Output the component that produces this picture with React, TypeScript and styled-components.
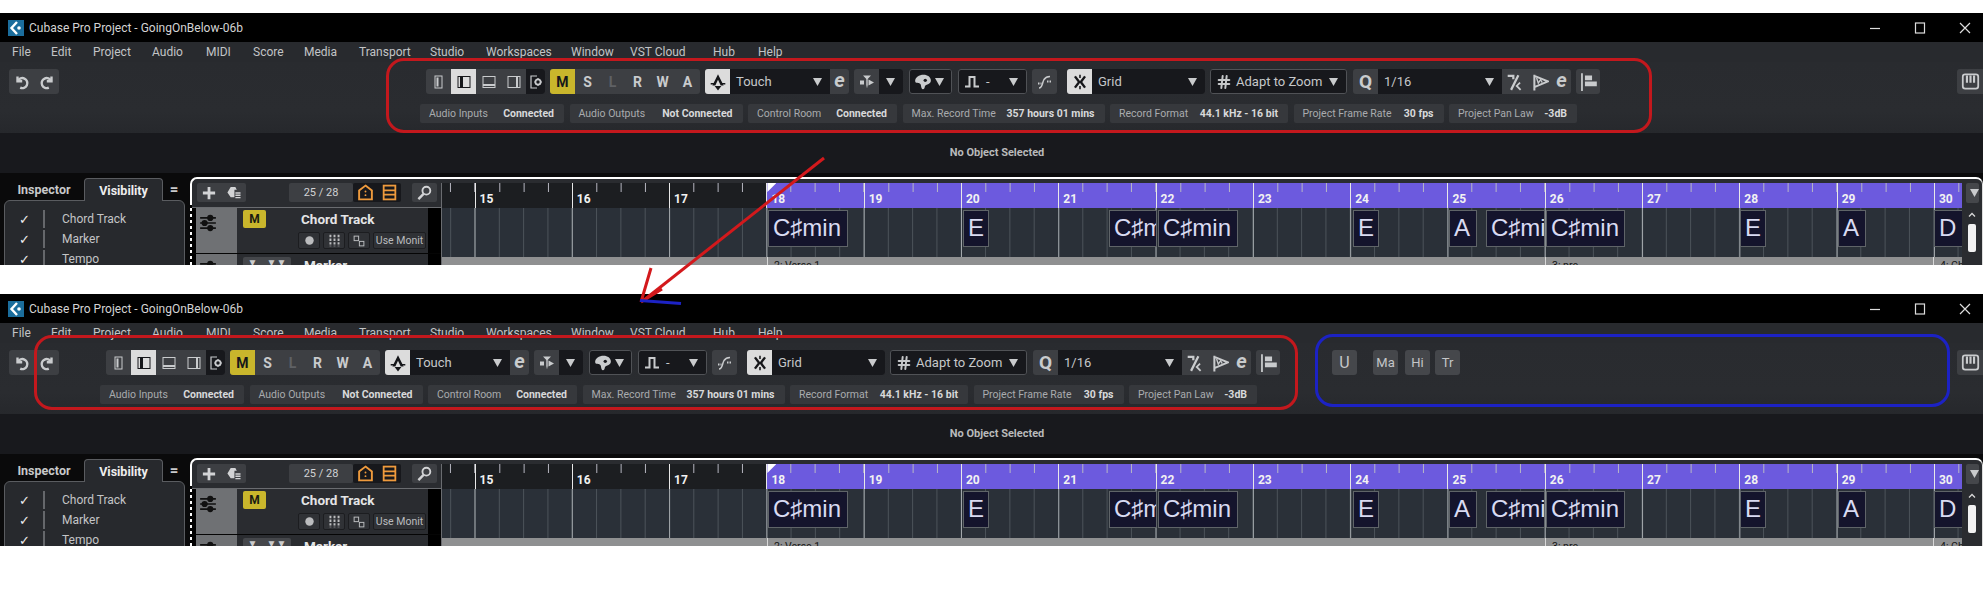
import React from 'react'
import styled, { createGlobalStyle } from 'styled-components'
import { Hash } from 'lucide-react'

const GlobalStyle = createGlobalStyle`
  html, body {
    margin: 0;
    padding: 0;
    background: #fff;
  }
`

const Page = styled.div`
  position: relative;
  width: 1983px;
  height: 600px;
  overflow: hidden;
  background: #fff;
  padding-top: 13px;
  box-sizing: border-box;
  display: flex;
  flex-direction: column;
  gap: 29px;
  font-family: Roboto, 'Open Sans', sans-serif;
`

const Shot = styled.div`
  position: relative;
  height: 252px;
  overflow: hidden;
  display: flex;
  flex-direction: column;
  background: #0a0a0b;
`

const TitleBar = styled.div`
  height: 29px;
  flex: none;
  background: #000;
  color: #d4d4d4;
  display: flex;
  align-items: center;
  padding-left: 8px;
  font-size: 12px;
  gap: 5px;
`

const WindowButtons = styled.div`
  margin-left: auto;
  display: flex;
  width: 114px;
  color: #ddd;
  align-items: center;
`

const WindowButton = styled.svg`
  width: 12px;
  height: 12px;
  margin-right: 33px;
  flex: none;
  fill: none;
  stroke: currentColor;
  stroke-width: 1.2;
  &:last-child {
    margin-right: 0;
  }
`

const MenuBar = styled.div`
  height: 20px;
  flex: none;
  background: #282a2e;
  display: flex;
  align-items: center;
  font-size: 12px;
  color: #c2c4c6;
  position: relative;
`

const MenuItem = styled.span<{ $x: number }>`
  position: absolute;
  left: ${p => p.$x}px;
`

const Toolbar = styled.div`
  height: 71px;
  flex: none;
  box-sizing: border-box;
  background: linear-gradient(#292b2f, #2a2c30 70%, #26282c);
  display: flex;
  align-items: flex-start;
  padding-top: 7px;
  padding-left: 9px;
`

const Center = styled.div<{ $ml: number }>`
  margin-left: ${p => p.$ml}px;
  width: 1180px;
  flex: none;
  display: flex;
  flex-direction: column;
  gap: 10px;
`

const ToolRow = styled.div`
  display: flex;
  padding-left: 6px;
`

const Group = styled.div<{ $w: number; $before?: number; $tone?: string; $outlined?: boolean }>`
  width: ${p => p.$w}px;
  margin-left: ${p => p.$before ?? 0}px;
  height: 25px;
  flex: none;
  box-sizing: border-box;
  border-radius: 3px;
  overflow: hidden;
  display: flex;
  background: ${p => p.$tone ?? '#3d3f43'};
  border: ${p => (p.$outlined ? '1px solid #505256' : '0')};
  color: #c9cbcd;
`

const Cell = styled.div<{ $w?: number; $look?: 'on' | 'dark' | 'yellow' | 'dim' }>`
  width: ${p => p.$w ?? 25}px;
  flex: none;
  display: flex;
  align-items: center;
  justify-content: center;
  font-weight: 700;
  font-size: 14px;
  background: ${p =>
    p.$look === 'on' ? '#dcdcdc' : p.$look === 'dark' ? '#17181c' : p.$look === 'yellow' ? '#c9b62c' : 'transparent'};
  color: ${p =>
    p.$look === 'on' || p.$look === 'yellow' ? '#16171a' : p.$look === 'dim' ? '#5f6165' : 'inherit'};
`

const QLetter = styled.span`
  font-size: 19px;
`

const LetterE = styled.span`
  font-style: italic;
  font-size: 20px;
  font-weight: 700;
  line-height: 1;
  margin-top: -3px;
`

const Field = styled.div<{ $pad?: number }>`
  flex: 1;
  min-width: 0;
  background: #17181c;
  display: flex;
  align-items: center;
  padding: 0 8px 0 ${p => p.$pad ?? 6}px;
  font-size: 13px;
  color: #c6c8ca;
  gap: 4px;
`

const Drop = styled.svg`
  width: 9px;
  height: 8px;
  margin-left: auto;
  flex: none;
  fill: #c9cbcd;
`

const Pills = styled.div`
  display: flex;
  gap: 5.5px;
`

const Pill = styled.div<{ $w: number }>`
  width: ${p => p.$w}px;
  height: 19px;
  flex: none;
  box-sizing: border-box;
  background: #36383c;
  border-radius: 2px;
  display: flex;
  align-items: center;
  justify-content: space-between;
  padding: 0 10px 0 9px;
  font-size: 10.5px;
  color: #a9abae;
`

const PillValue = styled.b`
  color: #d8d9da;
  font-weight: 700;
`

const Extras = styled.div`
  margin-left: 52px;
  display: flex;
`

const ExtraButton = styled.div<{ $before: number; $big?: boolean }>`
  margin-left: ${p => p.$before}px;
  width: 25px;
  height: 25px;
  border-radius: 3px;
  background: #45474b;
  color: #c4c6c8;
  font-size: ${p => (p.$big ? 16 : 13)}px;
  display: flex;
  align-items: center;
  justify-content: center;
`

const KeysButton = styled(Group)`
  margin-left: auto;
  align-items: center;
  justify-content: center;
  border-radius: 3px 0 0 3px;
`

const InfoBar = styled.div`
  height: 40px;
  flex: none;
  background: #18191d;
  color: #b9babb;
  font-size: 11px;
  font-weight: 700;
  display: flex;
  align-items: center;
  justify-content: center;
  padding: 0 0 0 11px;
  padding-bottom: 2px;
  box-sizing: border-box;
`

const Work = styled.div`
  flex: 1;
  display: flex;
  min-height: 0;
`

const Side = styled.div`
  width: 190px;
  flex: none;
  padding-left: 4px;
  box-sizing: border-box;
`

const Tabs = styled.div`
  height: 27px;
  display: flex;
  align-items: flex-end;
  font-size: 12.5px;
  font-weight: 700;
  color: #c8c9ca;
`

const Tab = styled.div<{ $active?: boolean; $w: number; $big?: boolean }>`
  width: ${p => p.$w}px;
  height: 23px;
  box-sizing: border-box;
  display: flex;
  align-items: center;
  justify-content: center;
  margin-bottom: ${p => (p.$active ? -1 : 0)}px;
  border: 1px solid ${p => (p.$active ? '#5a5c60' : 'transparent')};
  border-bottom: 0;
  border-radius: 4px 4px 0 0;
  background: ${p => (p.$active ? '#27292d' : 'transparent')};
  color: ${p => (p.$active ? '#eee' : 'inherit')};
  font-size: ${p => (p.$big ? 15 : 12.5)}px;
  position: relative;
`

const Panel = styled.div`
  width: 181px;
  height: 70px;
  box-sizing: border-box;
  background: #27292d;
  border: 1px solid #5a5c60;
  border-radius: 6px 6px 0 0;
  padding-top: 8px;
`

const VisRow = styled.div`
  height: 20px;
  display: flex;
  align-items: center;
  font-size: 12px;
  color: #c4c5c7;
`

const Check = styled.span`
  width: 38px;
  flex: none;
  padding-left: 14px;
  box-sizing: border-box;
  font-size: 13px;
  font-weight: 700;
  color: #eee;
  font-family: 'DejaVu Sans', sans-serif;
`

const VisBar = styled.span`
  width: 2px;
  height: 18px;
  background: #65676b;
  margin-right: 17px;
`

const TrackFrame = styled.div`
  position: relative;
  flex: 1;
  margin-top: 4px;
  box-sizing: border-box;
  border-top: 2px solid #fff;
  border-left: 2px solid #fff;
  border-right: 1px solid #ddd;
  border-radius: 7px 7px 0 0;
  background: #2a2c30;
  padding-top: 4px;
  display: flex;
  min-width: 0;
  &::after {
    content: '';
    position: absolute;
    left: -2px;
    top: 26px;
    bottom: 0;
    width: 2px;
    background: repeating-linear-gradient(#000 0 3px, transparent 3px 6px);
  }
`

const Head = styled.div`
  width: 250px;
  flex: none;
  box-sizing: border-box;
  border-right: 1px solid #6a6c70;
  display: flex;
  flex-direction: column;
`

const HeadBar = styled.div`
  height: 25px;
  flex: none;
  box-sizing: border-box;
  border-bottom: 1px solid #6a6c70;
  display: flex;
  padding-left: 5px;
`

const SmallGroup = styled.div<{ $w: number; $before?: number; $tone?: string }>`
  width: ${p => p.$w}px;
  margin-left: ${p => p.$before ?? 0}px;
  height: 19px;
  flex: none;
  border-radius: 2px;
  display: flex;
  align-items: center;
  justify-content: space-around;
  background: ${p => p.$tone ?? '#3d3f43'};
  color: #d2d3d5;
  font-size: 11px;
  overflow: hidden;
`

const TrackRow = styled.div`
  display: flex;
  height: 46px;
  flex: none;
  box-sizing: border-box;
  padding-left: 4px;
  border-bottom: 1px solid #050505;
  background: #000;
`

const Handle = styled.div`
  width: 41px;
  flex: none;
  background: #6f7174;
  color: #111;
  padding: 6px 0 0 3px;
  box-sizing: border-box;
`

const TrackBody = styled.div`
  width: 191px;
  flex: none;
  background: #2a2c30;
  display: flex;
  box-sizing: border-box;
  padding-top: 2px;
`

const TrackMute = styled.div`
  width: 23px;
  height: 18px;
  margin: 0 32px 0 6px;
  flex: none;
  border-radius: 2px;
  background: #c9b62c;
  color: #1b1b12;
  font-size: 12px;
  font-weight: 700;
  display: flex;
  align-items: center;
  justify-content: center;
`

const TrackMain = styled.div`
  display: flex;
  flex-direction: column;
  min-width: 0;
`

const TrackName = styled.div`
  height: 22px;
  box-sizing: border-box;
  padding: 0 0 4px 3px;
  color: #e4e5e6;
  font-size: 13.5px;
  font-weight: 700;
  display: flex;
  align-items: center;
`

const TrackButtons = styled.div`
  display: flex;
  gap: 3px;
`

const TrackButton = styled.div<{ $w?: number }>`
  width: ${p => p.$w ?? 22}px;
  height: 17px;
  flex: none;
  border: 1px solid #1c1d20;
  box-sizing: border-box;
  border-radius: 2px;
  background: #303236;
  color: #bbbcbe;
  font-size: 10.5px;
  display: flex;
  align-items: center;
  justify-content: center;
  overflow: hidden;
  white-space: nowrap;
`

const MarkerTools = styled.div`
  width: 48px;
  height: 18px;
  margin: 1px 10px 0 6px;
  flex: none;
  border-radius: 2px;
  background: #45474b;
  color: #ccc;
  display: flex;
  justify-content: space-around;
  font-size: 10px;
`

const Timeline = styled.div`
  flex: 1;
  min-width: 0;
  overflow: hidden;
  position: relative;
`

const Ruler = styled.div`
  height: 25px;
  display: flex;
  margin-left: -64.8px;
`

const BarCell = styled.div<{ $cycle: boolean }>`
  width: 97.3px;
  flex: none;
  position: relative;
  box-sizing: border-box;
  padding: 9px 0 0 5px;
  font-size: 12px;
  font-weight: 700;
  color: #f2f2f2;
  background-color: ${p => (p.$cycle ? '#6c5ade' : '#1c1e21')};
  background-image: linear-gradient(#e8e8e8, #e8e8e8),
    linear-gradient(to right, #b9b9c4 1px, transparent 1px);
  background-size: 1px 100%, 24.325px 9px;
  background-repeat: no-repeat, repeat-x;
`

const CycleFlag = styled.span`
  position: absolute;
  left: 1px;
  top: 0;
  width: 9px;
  height: 9px;
  background: #fff;
  clip-path: polygon(0 0, 100% 0, 0 100%);
`

const Lane = styled.div`
  position: relative;
  height: 49px;
  background-color: #2a3038;
  background-image: linear-gradient(to right, #a4a9ad 1px, transparent 1px),
    linear-gradient(to right, #4c535a 1px, transparent 1px);
  background-size: 97.3px 100%, 24.325px 100%;
  background-position: 32.5px 0, 8.2px 0;
`

const Chord = styled.div<{ $x: number; $w: number }>`
  position: absolute;
  left: ${p => p.$x}px;
  width: ${p => p.$w}px;
  top: 2px;
  height: 37px;
  box-sizing: border-box;
  overflow: hidden;
  white-space: nowrap;
  background: #14142c;
  border: 1px solid #5f6468;
  color: #d9dbf2;
  font-family: 'Liberation Sans', sans-serif;
  font-size: 24px;
  line-height: 34px;
  padding-left: 4px;
`

const MarkerLane = styled.div`
  position: relative;
  height: 12px;
  background: #8f9091;
`

const MarkerTag = styled.span<{ $x: number }>`
  position: absolute;
  left: ${p => p.$x}px;
  top: 0;
  height: 12px;
  border-left: 1px solid #d8d8d8;
  padding: 2px 0 0 6px;
  font-size: 10.5px;
  color: #161616;
  white-space: nowrap;
`

const Scroller = styled.div`
  width: 20px;
  flex: none;
  display: flex;
  flex-direction: column;
  align-items: center;
  color: #d8d8d8;
`

const ScrollTop = styled.div`
  width: 13px;
  height: 20px;
  border-radius: 2px;
  background: #45474b;
  display: flex;
  align-items: center;
  justify-content: center;
  margin-bottom: 8px;
`

const Thumb = styled.div`
  width: 8px;
  height: 28px;
  border-radius: 2px;
  background: #f2f2f2;
  margin-top: 5px;
`

const Frame = styled.div<{ $x: number; $y: number; $w: number; $h: number; $color: string }>`
  position: absolute;
  left: ${p => p.$x}px;
  top: ${p => p.$y}px;
  width: ${p => p.$w}px;
  height: ${p => p.$h}px;
  box-sizing: border-box;
  border: 3px solid ${p => p.$color};
  border-radius: 18px;
  pointer-events: none;
`

const Arrow = styled.svg`
  position: absolute;
  left: 0;
  top: 0;
  width: 1983px;
  height: 600px;
  pointer-events: none;
`

// no stroke-width in the template: it would beat the attribute on every drawing
const Svg = styled.svg.attrs({ viewBox: '0 0 16 16' })<{ $s?: number; $tint?: string; $flip?: boolean }>`
  width: ${p => p.$s ?? 16}px;
  height: ${p => p.$s ?? 16}px;
  flex: none;
  fill: none;
  stroke: currentColor;
  color: ${p => p.$tint ?? 'inherit'};
  transform: ${p => (p.$flip ? 'scaleX(-1)' : 'none')};
`

const DropArrow = () => (
  <Drop viewBox="0 0 9 8">
    <path d="M0 0h9L4.5 8z" />
  </Drop>
)

const Logo = () => (
  <svg width="16" height="16" viewBox="0 0 16 16">
    <rect width="16" height="16" fill="#1b6d9c" />
    <path d="M9 2L3.5 8 9 14" fill="none" stroke="#fff" strokeWidth="2.4" />
    <circle cx="11" cy="8" r="1.8" fill="#fff" />
  </svg>
)

const Undo = ({ flip }: { flip?: boolean }) => (
  <Svg $flip={flip} strokeWidth="2.4">
    <path d="M3.5 2.5v4.7h4.7" />
    <path d="M3.8 7a5 5 0 1 1 2.4 6.6" />
  </Svg>
)

const PanelIcon = ({ d, narrow }: { d: string; narrow?: boolean }) => (
  <Svg strokeWidth="1">
    {narrow ? <rect x="4" y="2" width="7" height="12" /> : <rect x="2" y="2.5" width="12" height="11" />}
    <path d={d} fill="currentColor" stroke="none" />
  </Svg>
)

const GearDoc = () => (
  <Svg strokeWidth="1.2">
    <path d="M9 2H3v12h6" />
    <circle cx="10" cy="8" r="2.6" strokeWidth="1.8" />
    <path d="M10 4v1.2M10 10.8V12M6.2 8h1M12.8 8H14" />
  </Svg>
)

const TouchIcon = () => (
  <Svg $s={18}>
    <path d="M8 1L3 11h2.6L8 6l2.4 5H13z" fill="currentColor" stroke="none" />
    <path d="M5 11.5h6L8 15.5z" fill="currentColor" stroke="none" />
    <path d="M1.5 9.5h3M11.5 9.5h3" strokeWidth="1.4" />
  </Svg>
)

const SplitIcon = () => (
  <Svg>
    <path d="M4 1.5h8L8.7 5v6L8 14.5 7.3 11V5z" fill="currentColor" stroke="none" />
    <path d="M1 6.5h4v4H1zM9.5 5.5L15 8.5l-5.5 3z" fill="currentColor" stroke="none" />
  </Svg>
)

const Palette = () => (
  <Svg $s={18}>
    <path
      d="M8.5 1.5C4.5 1.5 1 3.8 1 7c0 1.2.8 1.6 1.8 1.6 2 0 3.2.8 3.4 2.6.1 1.6.6 3.3 1.8 3.3 1 0 1.4-1.2 1.6-2.3.2-1 .8-1.4 1.8-1.8C13.8 9.6 15 8.4 15 6.6c0-3-2.9-5.1-6.5-5.1z"
      fill="currentColor"
      stroke="none"
    />
    <circle cx="10" cy="6.5" r="1.5" fill="#17181c" stroke="none" />
  </Svg>
)

const PulseIcon = () => (
  <Svg strokeWidth="2">
    <path d="M1 12.5h4.5V3h5v9.5H15" />
  </Svg>
)

const FadeIcon = () => (
  <Svg strokeWidth="1.5">
    <path d="M2 14c3.5 0 3-5 5-8.5C8.2 3.6 10 2.5 13 2.5" />
    <path d="M1 9.5h3.5M10 7.5h5" strokeWidth="1.8" strokeDasharray="1.5 1" />
  </Svg>
)

const SnapIcon = () => (
  <Svg $s={18} strokeWidth="2.1">
    <path d="M3.5 3l3.8 5-3.8 5M12.5 3L8.7 8l3.8 5" />
    <path d="M8 1.5v3M8 11.5v3" strokeWidth="1.4" />
  </Svg>
)

const SwingIcon = () => (
  <Svg $s={18} strokeWidth="2">
    <path d="M1.5 2.5h5v3M11 2L4.5 15" />
    <path d="M12.5 8.5l-3 3 3.5 3.5" strokeWidth="1.6" />
  </Svg>
)

const FlagIcon = () => (
  <Svg $s={18} strokeWidth="1.8">
    <path d="M3 1.5v14M3 2.5l12 5-12 5" />
    <path d="M5 4.5L6.5 9l2-3 1.5 2.5" strokeWidth="1.2" />
  </Svg>
)

const AlignIcon = () => (
  <Svg $s={19} strokeWidth="1.5">
    <path d="M2.5 1v15" />
    <path d="M5 3h6v4H5zM5 8h10v4H5z" fill="currentColor" stroke="none" />
  </Svg>
)

const KeysIcon = () => (
  <Svg $s={19} strokeWidth="1.5">
    <rect x="1.5" y="2" width="13" height="12" rx="2" />
    <path d="M5 3v6M8 3v6M11 3v6" strokeWidth="1.8" />
  </Svg>
)

const PlusIcon = () => (
  <Svg $s={14} strokeWidth="3.2">
    <path d="M8 1v14M1 8h14" />
  </Svg>
)

const PresetIcon = () => (
  <Svg $s={15} strokeWidth="1.5">
    <path d="M5 2h5l1.5 3H9v8H5L1.5 8z" fill="currentColor" stroke="none" />
    <path d="M10 8.5h5.5M10 11h5.5M10 13.5h5.5" />
  </Svg>
)

const HomeIcon = () => (
  <Svg $s={17} $tint="#ee9a3d" strokeWidth="1.8">
    <path d="M8 1.5L14 6v8.5H2V6z" />
    <circle cx="8" cy="7" r="0.9" fill="currentColor" stroke="none" />
    <circle cx="8" cy="10.5" r="0.9" fill="currentColor" stroke="none" />
  </Svg>
)

const ListIcon = () => (
  <Svg $s={17} $tint="#ee9a3d" strokeWidth="1.7">
    <rect x="2.5" y="1.5" width="11" height="13" />
    <path d="M2.5 6h11M2.5 10h11" />
  </Svg>
)

const SearchIcon = () => (
  <Svg $s={15} strokeWidth="2">
    <circle cx="10" cy="6" r="4.2" />
    <path d="M7 9.5L1.5 15" strokeWidth="2.6" />
  </Svg>
)

const SlidersIcon = () => (
  <Svg $s={18} strokeWidth="1.5">
    <path d="M1 3.5h14M1 8h14M1 12.5h14" />
    <circle cx="10" cy="3.5" r="2" fill="currentColor" />
    <circle cx="5" cy="8" r="2" fill="currentColor" />
    <circle cx="10" cy="12.5" r="2" fill="currentColor" />
  </Svg>
)

const MixIcon = () => (
  <Svg $s={13} strokeWidth="2.4">
    <path d="M3 1v14M8 1v14M13 1v14" strokeDasharray="3 1.5" />
  </Svg>
)

const RouteIcon = () => (
  <Svg $s={12} strokeWidth="1.3">
    <rect x="1.5" y="1.5" width="6" height="6" />
    <rect x="8.5" y="8.5" width="6" height="6" />
  </Svg>
)

const DotIcon = () => (
  <Svg $s={9}>
    <circle cx="8" cy="8" r="7.5" fill="currentColor" stroke="none" />
  </Svg>
)

const ChevronUp = () => (
  <Svg $s={8} strokeWidth="2.5">
    <path d="M2 11l6-6 6 6" />
  </Svg>
)

const menu: [string, number][] = [
  ['File', 12], ['Edit', 51], ['Project', 93], ['Audio', 152], ['MIDI', 206], ['Score', 253],
  ['Media', 304], ['Transport', 359], ['Studio', 430], ['Workspaces', 486], ['Window', 571],
  ['VST Cloud', 630], ['Hub', 713], ['Help', 758],
]

const pills: [string, string, number][] = [
  ['Audio Inputs', 'Connected', 144],
  ['Audio Outputs', 'Not Connected', 173],
  ['Control Room', 'Connected', 149],
  ['Max. Record Time', '357 hours 01 mins', 202],
  ['Record Format', '44.1 kHz - 16 bit', 178],
  ['Project Frame Rate', '30 fps', 150],
  ['Project Pan Law', '-3dB', 128],
]

const bars = Array.from({ length: 17 }, (_, i) => i + 14)

const chords: [string, number, number][] = [
  ['C♯min', 767, 80], ['E', 962, 26], ['C♯m', 1108, 48], ['C♯min', 1157, 80], ['E', 1352, 26],
  ['A', 1448, 28], ['C♯mi', 1485, 59], ['C♯min', 1545, 79], ['E', 1739, 26], ['A', 1837, 28], ['D', 1933, 29],
]

const LANE_X = 441

const CubaseShot = ({ shifted }: { shifted?: boolean }) => (
  <Shot>
    <TitleBar>
      <Logo />
      Cubase Pro Project - GoingOnBelow-06b
      <WindowButtons>
        <WindowButton viewBox="0 0 12 12"><path d="M1 6.5h10" /></WindowButton>
        <WindowButton viewBox="0 0 12 12"><rect x="1.5" y="1" width="9" height="10" /></WindowButton>
        <WindowButton viewBox="0 0 12 12"><path d="M1 1l10 10M11 1L1 11" /></WindowButton>
      </WindowButtons>
    </TitleBar>
    <MenuBar>
      {menu.map(([label, x]) => (
        <MenuItem key={label} $x={x}>{label}</MenuItem>
      ))}
    </MenuBar>
    <Toolbar>
      <Group $w={50}>
        <Cell><Undo /></Cell>
        <Cell><Undo flip /></Cell>
      </Group>
      <Center $ml={shifted ? 41 : 361}>
        <ToolRow>
          <Group $w={119}>
            <Cell><PanelIcon narrow d="M5.5 3.5h2v9h-2z" /></Cell>
            <Cell $look="on"><PanelIcon d="M4 2.5h3v11H4z" /></Cell>
            <Cell><PanelIcon d="M2 10h12v2H2z" /></Cell>
            <Cell><PanelIcon d="M10 2.5h2v11h-2z" /></Cell>
            <Cell $w={19} $look="dark"><GearDoc /></Cell>
          </Group>
          <Group $w={150} $before={5}>
            <Cell $look="yellow">M</Cell>
            <Cell>S</Cell>
            <Cell $look="dim">L</Cell>
            <Cell>R</Cell>
            <Cell>W</Cell>
            <Cell>A</Cell>
          </Group>
          <Group $w={144} $before={5}>
            <Cell $look="on"><TouchIcon /></Cell>
            <Field>Touch<DropArrow /></Field>
            <Cell $w={19}><LetterE>e</LetterE></Cell>
          </Group>
          <Group $w={49} $before={5}>
            <Cell><SplitIcon /></Cell>
            <Field><DropArrow /></Field>
          </Group>
          <Group $w={43} $before={6} $tone="#17181c" $outlined>
            <Cell><Palette /></Cell>
            <Field $pad={0}><DropArrow /></Field>
          </Group>
          <Group $w={69} $before={6} $tone="#17181c" $outlined>
            <Cell><PulseIcon /></Cell>
            <Field $pad={2}>-<DropArrow /></Field>
          </Group>
          <Group $w={25} $before={5}>
            <Cell><FadeIcon /></Cell>
          </Group>
          <Group $w={138} $before={10}>
            <Cell $look="on"><SnapIcon /></Cell>
            <Field>Grid<DropArrow /></Field>
          </Group>
          <Group $w={137} $before={5} $tone="#17181c" $outlined>
            <Field $pad={5}>
              <Hash size={16} strokeWidth={3} />
              Adapt to Zoom
              <DropArrow />
            </Field>
          </Group>
          <Group $w={218} $before={6}>
            <Cell><QLetter>Q</QLetter></Cell>
            <Field>1/16<DropArrow /></Field>
            <Cell><SwingIcon /></Cell>
            <Cell $w={25}><FlagIcon /></Cell>
            <Cell $w={19}><LetterE>e</LetterE></Cell>
          </Group>
          <Group $w={24} $before={5}>
            <Cell $w={24}><AlignIcon /></Cell>
          </Group>
        </ToolRow>
        <Pills>
          {pills.map(([label, value, w]) => (
            <Pill key={label} $w={w}>
              <span>{label}</span>
              <PillValue>{value}</PillValue>
            </Pill>
          ))}
        </Pills>
      </Center>
      {shifted && (
        <Extras>
          <ExtraButton $before={0} $big>U</ExtraButton>
          <ExtraButton $before={16}>Ma</ExtraButton>
          <ExtraButton $before={7}>Hi</ExtraButton>
          <ExtraButton $before={5}>Tr</ExtraButton>
        </Extras>
      )}
      <KeysButton $w={26}><KeysIcon /></KeysButton>
    </Toolbar>
    <InfoBar>No Object Selected</InfoBar>
    <Work>
      <Side>
        <Tabs>
          <Tab $w={80}>Inspector</Tab>
          <Tab $w={79} $active>Visibility</Tab>
          <Tab $w={22} $big>=</Tab>
        </Tabs>
        <Panel>
          <VisRow><Check>✓</Check><VisBar />Chord Track</VisRow>
          <VisRow><Check>✓</Check><VisBar />Marker</VisRow>
          <VisRow><Check>✓</Check><VisBar />Tempo</VisRow>
        </Panel>
      </Side>
      <TrackFrame>
        <Head>
          <HeadBar>
            <SmallGroup $w={49}><PlusIcon /><PresetIcon /></SmallGroup>
            <SmallGroup $w={64} $before={43}>25 / 28</SmallGroup>
            <SmallGroup $w={48} $tone="#17181c"><HomeIcon /><ListIcon /></SmallGroup>
            <SmallGroup $w={25} $before={11}><SearchIcon /></SmallGroup>
          </HeadBar>
          <TrackRow>
            <Handle><SlidersIcon /></Handle>
            <TrackBody>
              <TrackMute>M</TrackMute>
              <TrackMain>
                <TrackName>Chord Track</TrackName>
                <TrackButtons>
                  <TrackButton><DotIcon /></TrackButton>
                  <TrackButton><MixIcon /></TrackButton>
                  <TrackButton><RouteIcon /></TrackButton>
                  <TrackButton $w={53}>Use Monit</TrackButton>
                </TrackButtons>
              </TrackMain>
            </TrackBody>
          </TrackRow>
          <TrackRow>
            <Handle><SlidersIcon /></Handle>
            <TrackBody>
              <MarkerTools><span>▼</span><span>▼▼</span></MarkerTools>
              <TrackName>Marker</TrackName>
            </TrackBody>
          </TrackRow>
        </Head>
        <Timeline>
          <Ruler>
            {bars.map(n => (
              <BarCell key={n} $cycle={n >= 18}>
                {n === 18 && <CycleFlag />}
                {n}
              </BarCell>
            ))}
          </Ruler>
          <Lane>
            {chords.map(([name, x, w]) => (
              <Chord key={x} $x={x - LANE_X} $w={w}>{name}</Chord>
            ))}
          </Lane>
          <MarkerLane>
            <MarkerTag $x={325}>2: Verse 1</MarkerTag>
            <MarkerTag $x={1103}>3: pre</MarkerTag>
            <MarkerTag $x={1491}>4: Chorus</MarkerTag>
          </MarkerLane>
        </Timeline>
        <Scroller>
          <ScrollTop><DropArrow /></ScrollTop>
          <ChevronUp />
          <Thumb />
        </Scroller>
      </TrackFrame>
    </Work>
    {shifted ? (
      <>
        <Frame $x={34} $y={41} $w={1264} $h={75} $color="#c3181d" />
        <Frame $x={1315} $y={40} $w={635} $h={73} $color="#1c22c4" />
      </>
    ) : (
      <Frame $x={386} $y={45} $w={1266} $h={75} $color="#c3181d" />
    )}
  </Shot>
)

export default function App() {
  return (
    <Page>
      <GlobalStyle />
      <CubaseShot />
      <CubaseShot shifted />
      <Arrow viewBox="0 0 1983 600">
        <path d="M824 158L644 300" stroke="#d3191c" strokeWidth="3" fill="none" />
        <path d="M641 302L651 268M641 302L662 289" stroke="#d3191c" strokeWidth="3" fill="none" />
        <path d="M640 300.5L681 303.5" stroke="#1c22c4" strokeWidth="3" fill="none" />
      </Arrow>
    </Page>
  )
}
